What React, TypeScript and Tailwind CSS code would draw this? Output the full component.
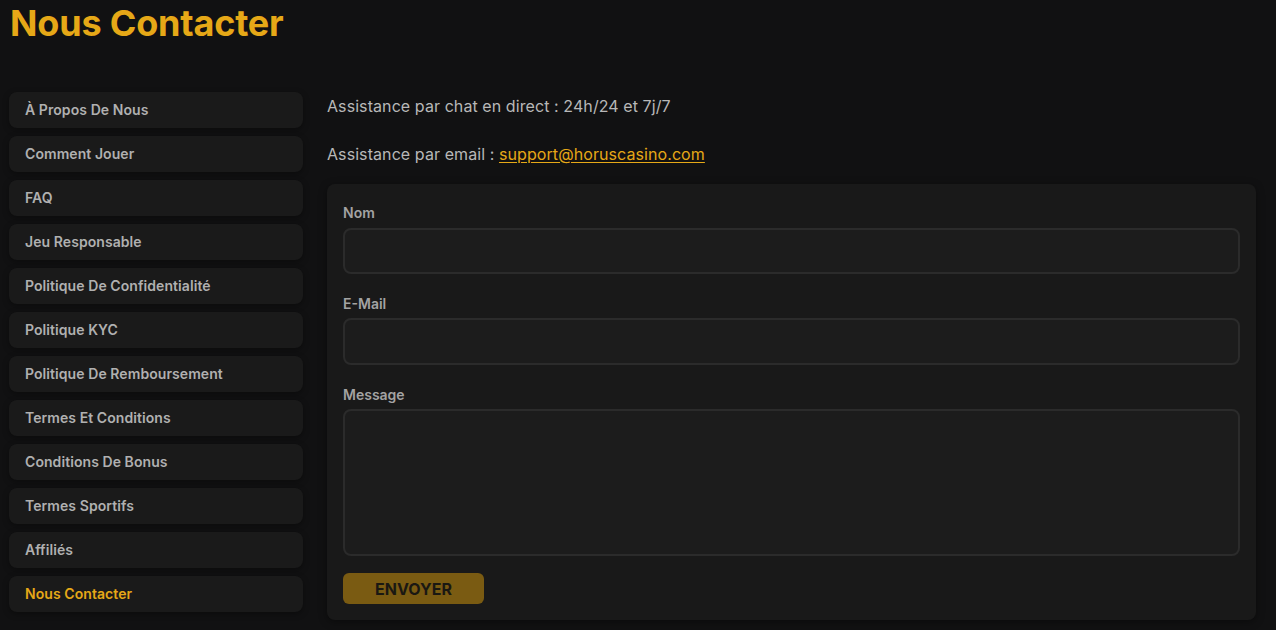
import { useState } from "react";

const links = [
  "À Propos De Nous",
  "Comment Jouer",
  "FAQ",
  "Jeu Responsable",
  "Politique De Confidentialité",
  "Politique KYC",
  "Politique De Remboursement",
  "Termes Et Conditions",
  "Conditions De Bonus",
  "Termes Sportifs",
  "Affiliés",
  "Nous Contacter",
];

export default function App() {
  const [active] = useState("Nous Contacter");

  return (
    <div
      className="min-h-screen bg-[#111112] text-[#b3b3b3] px-[9px]"
      style={{ fontFamily: 'Inter, "Noto Sans", sans-serif' }}
    >
      <h1 className="pt-[3px] pl-[1px] text-[36px] leading-[40px] font-bold tracking-[-0.005em] text-[#e6a817]">
        Nous Contacter
      </h1>

      <div className="mt-[49px] grid grid-cols-[294px_1fr] gap-6 pr-[11px]">
        <nav className="flex flex-col gap-2">
          {links.map((l) => (
            <a
              key={l}
              href="#"
              className={
                "flex h-9 items-center rounded-lg bg-[#1a1a1a] px-4 text-sm font-semibold tracking-[0.005em] shadow-[0_2px_6px_rgba(0,0,0,0.35)] " +
                (l === active ? "text-[#e6a817]" : "text-[#b0b0b0]")
              }
            >
              {l}
            </a>
          ))}
        </nav>

        <section className="mt-[2px]">
          <p className="text-base leading-6 tracking-[0.005em] text-[#b8b8b8]">
            Assistance par chat en direct : 24h/24 et 7j/7
          </p>
          <p className="mt-6 text-base leading-6 tracking-[0.005em] text-[#b8b8b8]">
            Assistance par email :{" "}
            <a href="#" className="text-[#e6a817] underline underline-offset-2">
              support@horuscasino.com
            </a>
          </p>

          <form
            className="mt-[18px] rounded-lg bg-[#191919] px-4 pt-[19px] pb-4 shadow-[0_2px_8px_rgba(0,0,0,0.4)]"
            onSubmit={(e) => e.preventDefault()}
          >
            <label className="block text-sm leading-5 font-semibold text-[#a3a3a3]">Nom</label>
            <input
              type="text"
              className="mt-[5px] block h-[46px] w-full rounded-lg border-2 border-[#2b2b2b] bg-[#1c1c1c] px-3 text-[#ddd] outline-none"
            />

            <label className="mt-5 block text-sm leading-5 font-semibold text-[#a3a3a3]">E-Mail</label>
            <input
              type="email"
              className="mt-1 block h-[47px] w-full rounded-lg border-2 border-[#2b2b2b] bg-[#1c1c1c] px-3 text-[#ddd] outline-none"
            />

            <label className="mt-5 block text-sm leading-5 font-semibold text-[#a3a3a3]">Message</label>
            <textarea className="mt-1 block h-[147px] w-full resize-none rounded-lg border-2 border-[#2b2b2b] bg-[#1c1c1c] px-3 py-2 text-[#ddd] outline-none" />

            <button
              type="submit"
              className="mt-[17px] h-[31px] w-[141px] rounded-md bg-[#7a5b12] text-base font-bold text-[#1a1812]"
            >
              ENVOYER
            </button>
          </form>
        </section>
      </div>
    </div>
  );
}
